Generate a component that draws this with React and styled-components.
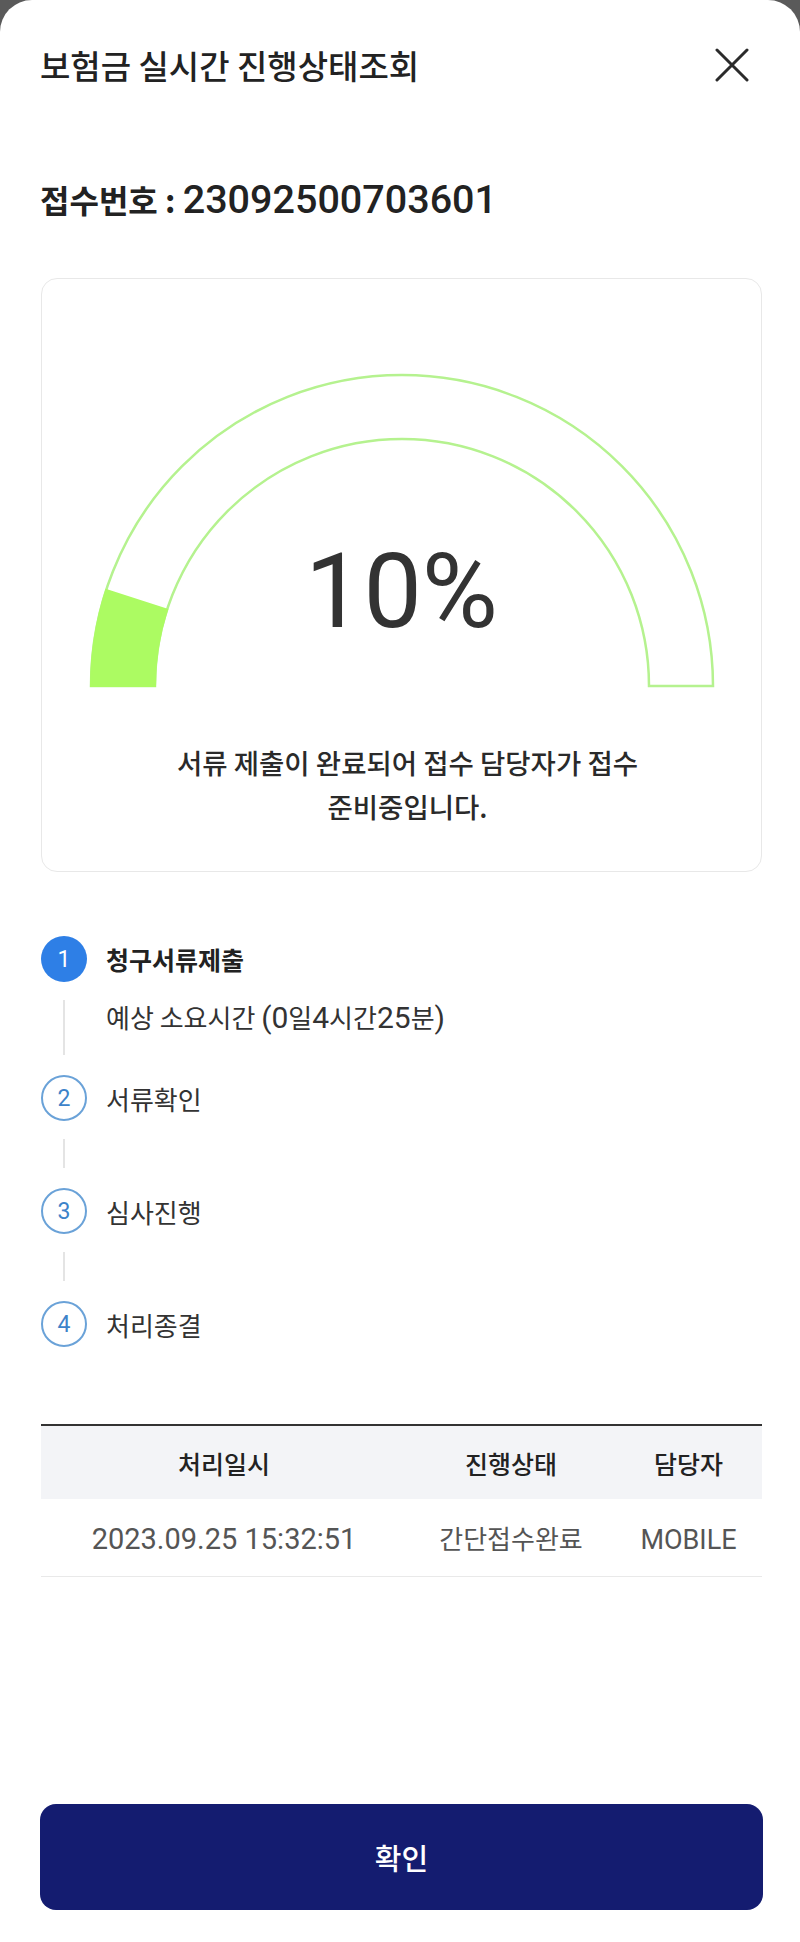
import React from 'react';
import styled, { createGlobalStyle } from 'styled-components';

const KR = `"Noto Sans CJK KR", "Noto Sans", sans-serif`;
const LATIN = `Roboto, "Noto Sans CJK KR", sans-serif`;

const steps = [
  { no: 1, label: '청구서류제출', active: true },
  { no: 2, label: '서류확인' },
  { no: 3, label: '심사진행' },
  { no: 4, label: '처리종결' },
];

// gauge geometry
const CX = 320;
const CY = 314;
const R = 311;
const r = 247;

const gaugePaths = pct => {
  const a = (Math.PI * pct) / 100;
  const track = `M ${CX - R} ${CY} A ${R} ${R} 0 0 1 ${CX + R} ${CY} L ${CX + r} ${CY} A ${r} ${r} 0 0 0 ${CX - r} ${CY} Z`;
  const ox = CX - R * Math.cos(a);
  const oy = CY - R * Math.sin(a);
  const ix = CX - r * Math.cos(a);
  const iy = CY - r * Math.sin(a);
  const fill = `M ${CX - R} ${CY} A ${R} ${R} 0 0 1 ${ox} ${oy} L ${ix} ${iy} A ${r} ${r} 0 0 0 ${CX - r} ${CY} Z`;
  return { track, fill };
};

const App = () => {
  const progress = 10;
  const { track, fill } = gaugePaths(progress);

  return (
    <>
      <GlobalStyle />
      <Sheet>
        <Header>
          <Title>보험금 실시간 진행상태조회</Title>
          <CloseButton aria-label="닫기">
            <svg width="34" height="34" viewBox="0 0 34 34">
              <path d="M2 2 L32 32 M32 2 L2 32" stroke="#2b2b2b" strokeWidth="3" strokeLinecap="round" fill="none" />
            </svg>
          </CloseButton>
        </Header>

        <Receipt>
          접수번호 : <Num $size="39.5px" $weight={500}>23092500703601</Num>
        </Receipt>

        <Card>
          <GaugeWrap>
            <svg width="640" height="320" viewBox="0 0 640 320">
              <path d={track} fill="#fff" stroke="#b5f28f" strokeWidth="2.5" />
              <path d={fill} fill="#acfb62" stroke="#acfb62" strokeWidth="2" />
            </svg>
            <GaugeValue>{progress}%</GaugeValue>
          </GaugeWrap>
          <Description>서류 제출이 완료되어 접수 담당자가 접수 준비중입니다.</Description>
        </Card>

        <StepList>
          {steps.map((s, i) => (
            <li key={s.no}>
              <StepHead>
                <Circle $active={s.active}>{s.no}</Circle>
                <StepLabel $active={s.active}>{s.label}</StepLabel>
              </StepHead>
              {i < steps.length - 1 && (
                <StepBody>
                  {s.active && (
                    <StepNote>
                      예상 소요시간 <Num $size="30px">(0</Num>일<Num $size="30px">4</Num>시간
                      <Num $size="30px">25</Num>분<Num $size="30px">)</Num>
                    </StepNote>
                  )}
                </StepBody>
              )}
            </li>
          ))}
        </StepList>

        <Table>
          <HeadRow>
            <HeadCell>처리일시</HeadCell>
            <HeadCell>진행상태</HeadCell>
            <HeadCell>담당자</HeadCell>
          </HeadRow>
          <BodyRow>
            <Cell>
              <Num $size="29px">2023.09.25 15:32:51</Num>
            </Cell>
            <Cell>간단접수완료</Cell>
            <Cell>
              <Num $size="27px">MOBILE</Num>
            </Cell>
          </BodyRow>
        </Table>

        <Footer>
          <ConfirmButton>확인</ConfirmButton>
        </Footer>
      </Sheet>
    </>
  );
};

const GlobalStyle = createGlobalStyle`
  * { box-sizing: border-box; }
  html, body {
    margin: 0;
    padding: 0;
    background: #5a5a5a;
  }
  body {
    font-family: ${KR};
    color: #333;
  }
`;

const Sheet = styled.div`
  display: flex;
  flex-direction: column;
  min-height: 1942px;
  background: #fff;
  border-radius: 32px 32px 0 0;
`;

const Header = styled.header`
  display: flex;
  align-items: center;
  justify-content: space-between;
  padding: 45px 48px 0 40px;
`;

const Title = styled.h1`
  margin: 0;
  font-family: ${KR};
  font-size: 33px;
  font-weight: 500;
  line-height: 40px;
  color: #222;
`;

const CloseButton = styled.button`
  display: flex;
  align-items: center;
  justify-content: center;
  width: 40px;
  height: 40px;
  padding: 0;
  border: 0;
  background: none;
`;

const Num = styled.span`
  font-family: ${LATIN};
  font-size: ${p => p.$size || '1em'};
  font-weight: ${p => p.$weight || 'inherit'};
`;

const Receipt = styled.p`
  margin: 90px 0 0;
  padding: 0 40px;
  font-family: ${KR};
  font-size: 32px;
  font-weight: 700;
  line-height: 48px;
  color: #222;
`;

const Card = styled.section`
  display: flex;
  flex-direction: column;
  align-items: center;
  margin: 54px 38px 0 41px;
  padding: 93px 0 43px;
  border: 1.5px solid #e8e8e8;
  border-radius: 16px;
`;

const GaugeWrap = styled.div`
  position: relative;
  width: 640px;
  height: 320px;

  svg {
    display: block;
  }
`;

const GaugeValue = styled.div`
  position: absolute;
  top: 168px;
  left: 0;
  right: 0;
  text-align: center;
  font-family: ${LATIN};
  font-size: 104px;
  font-weight: 400;
  line-height: 1;
  color: #333;
`;

const Description = styled.p`
  max-width: 532px;
  margin: 48px 0 0;
  padding-left: 12px;
  font-size: 27.5px;
  font-weight: 500;
  line-height: 44px;
  text-align: center;
  word-break: keep-all;
  color: #2a2a2a;
`;

const StepList = styled.ol`
  margin: 64px 0 0;
  padding: 0 41px;
  list-style: none;
`;

const StepHead = styled.div`
  display: flex;
  align-items: center;
  gap: 19px;
  height: 46px;
`;

const Circle = styled.span`
  display: flex;
  align-items: center;
  justify-content: center;
  width: 46px;
  height: 46px;
  border-radius: 50%;
  font-family: ${LATIN};
  font-size: 23px;
  background: ${p => (p.$active ? '#2e7fe6' : '#fff')};
  color: ${p => (p.$active ? '#fff' : '#3d83c9')};
  border: ${p => (p.$active ? 'none' : '2px solid #6aa2d8')};
`;

const StepLabel = styled.span`
  font-size: ${p => (p.$active ? '25px' : '26px')};
  font-weight: ${p => (p.$active ? 700 : 400)};
  color: ${p => (p.$active ? '#222' : '#333')};
`;

const StepBody = styled.div`
  margin: 18px 0 20px 22px;
  min-height: 29px;
  padding-left: 41px;
  border-left: 2px solid #e4e4e4;
`;

const StepNote = styled.p`
  margin: 0;
  padding-bottom: 20px;
  font-size: 26px;
  line-height: 34px;
  color: #333;
`;

const Table = styled.div`
  margin: 77px 38px 0 41px;
`;

const Row = styled.div`
  display: grid;
  grid-template-columns: 366px 208px 1fr;
  align-items: center;
`;

const HeadRow = styled(Row)`
  height: 75px;
  border-top: 2px solid #333;
  background: #f3f4f7;
`;

const BodyRow = styled(Row)`
  height: 78px;
  border-bottom: 1.5px solid #e9e9e9;
`;

const HeadCell = styled.div`
  text-align: center;
  font-size: 25px;
  font-weight: 500;
  color: #222;
`;

const Cell = styled.div`
  text-align: center;
  font-size: 26px;
  color: #555;
`;

const Footer = styled.footer`
  margin-top: auto;
  padding: 0 37px 32px 40px;
`;

const ConfirmButton = styled.button`
  width: 100%;
  height: 106px;
  border: 0;
  border-radius: 16px;
  background: #141c70;
  color: #fff;
  font-family: ${KR};
  font-size: 29px;
  font-weight: 500;
`;

export default App;
